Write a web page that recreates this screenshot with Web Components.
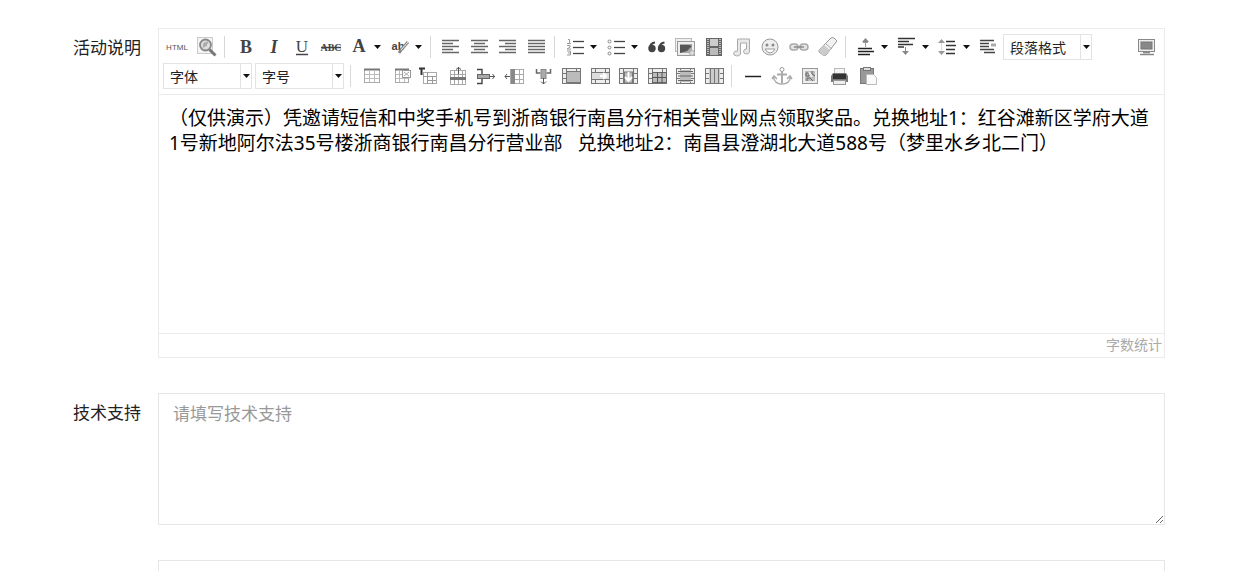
<!DOCTYPE html>
<html lang="zh-CN">
<head>
<meta charset="utf-8">
<meta name="viewport" content="width=device-width, initial-scale=1">
<title>活动设置</title>
<style>
html { scrollbar-width: none; }
body { margin: 0; background: #fff; color: #222; font-family: "Noto Sans", "Noto Sans CJK SC", sans-serif; font-size: 17px; }
</style>
</head>
<body>
<activity-form></activity-form>
<script>
const P = (d, c = '#666', w = 1) => `<path d="${d}" fill="none" stroke="${c}" stroke-width="${w}"/>`;
const R = (x, y, w, h, f, s) => `<rect x="${x}" y="${y}" width="${w}" height="${h}" fill="${f}"${s ? ` stroke="${s}"` : ''}/>`;
const T = (x, y, size, txt, extra = '') => `<text x="${x}" y="${y}" font-size="${size}" text-anchor="middle" fill="#444" ${extra}>${txt}</text>`;
const serif = 'font-family="Liberation Serif, serif" font-weight="bold"';
const lines = (list, c = '#666', w = 1.5) => list.map(([x, y, len]) => P(`M${x} ${y}h${len}`, c, w)).join('');
const miniGrid = (extra = '') => R(1.5, 2.5, 18, 15, '#eee', '#777') + P('M1.5 7.5h18M1.5 12.5h18M5.5 2.5v15M15.5 2.5v15', '#777') + extra;

const ICONS = {
  html: T(9, 13, 8, 'HTML', 'font-family="Liberation Sans, sans-serif" style="fill:#555"'),
  preview: R(.5, .5, 15, 16, '#f4f4f4', '#ccc') + '<circle cx="8.500" cy="8" r="5.500" fill="#ddd" stroke="#888" stroke-width="1.800"/><path d="M5.500 11l1-5 5-2-2 5z" fill="#aaa"/>' + P('M12.500 12.500l6 6', '#777', 3),
  bold: T(11, 16, 18, 'B', serif),
  italic: T(10, 16, 18, 'I', serif + ' font-style="italic"'),
  underline: T(10, 15, 17, 'U', serif + ' style="font-weight:normal"') + P('M4 17.5h12', '#444', 1.5),
  strike: T(10, 14, 10, 'ABC', serif) + P('M0 10.5h20', '#444', 1.5),
  color: T(10, 15, 18, 'A', serif),
  mark: T(8, 13, 11, 'ab', 'font-family="Liberation Sans, sans-serif" font-weight="bold"') + P('M18 5l-7 8-2 3', '#888', 3) + P('M18 5l-7 8', '#eee', 1),
  left: lines([[1,3.5,17],[1,6.5,11],[1,9.5,17],[1,12.5,11],[1,15.5,17]]),
  center: lines([[1,3.5,17],[4,6.5,11],[1,9.5,17],[4,12.5,11],[1,15.5,17]]),
  right: lines([[1,3.5,17],[7,6.5,11],[1,9.5,17],[7,12.5,11],[1,15.5,17]]),
  justify: lines([[1,3.5,17],[1,6.5,17],[1,9.5,17],[1,12.5,17],[1,15.5,17]]),
  ol: lines([[8,4.5,11],[8,10.5,11],[8,16.5,11]], '#444', 1.3) + P('M3 2.5h1.5v4M2 6.5h4M2 8.5h3v1.5l-3 2h4M2 14h3.500v4H2M3 16h2', '#999'),
  ul: lines([[8,4.5,11],[8,10.5,11],[8,16.5,11]], '#444', 1.3) + '<g fill="#fff" stroke="#888"><circle cx="3.500" cy="4.5" r="1.5"/><circle cx="3.500" cy="10.5" r="1.5"/><circle cx="3.500" cy="16.5" r="1.5"/></g>',
  quote: '<g fill="#444"><circle cx="5" cy="11.500" r="3.700"/><circle cx="14.500" cy="11.500" r="3.700"/></g><path d="M8 5.500Q3.500 6 2.500 11M17.500 5.500q-4.500 .5-5.500 5.500" fill="none" stroke="#444" stroke-width="2"/>',
  image: R(-.5, 1.5, 16, 13, '#eee', '#bbb') + R(1.5, 4.5, 17, 14, '#eee', '#999') + R(4, 7, 12, 9, '#aaa') + '<path d="M4 8h9l3 1-5 5-7 2z" fill="#555"/><circle cx="16" cy="16" r="2.5" fill="#ddd" stroke="#aaa"/>',
  video: R(2, 1, 16, 18, '#666') + R(6, 2, 8, 7, '#ccc') + R(6, 11, 8, 7, '#bbb') + '<path d="M4 2v16M16 2v16" stroke="#ddd" stroke-width="1.500" stroke-dasharray="1 1"/>',
  music: '<path d="M5.500 2h12v13a3 2.500 0 1 1-3-3V6h-6v11a3.500 2.500 0 1 1-3-3z" fill="#e8e8e8" stroke="#aaa"/>',
  face: '<circle cx="9" cy="10" r="8" fill="#eee" stroke="#999"/><circle cx="6" cy="8" r="1.500" fill="#888"/><circle cx="12" cy="8" r="1.500" fill="#888"/><path d="M4 12h10q-2 4-5 4t-5-4z" fill="#fff" stroke="#999"/>',
  link: '<g fill="#e4e4e4" stroke="#aaa" stroke-width="1.500"><rect x="1" y="7" width="8" height="6" rx="3"/><rect x="11" y="7" width="8" height="6" rx="3"/></g>' + P('M5 10h10', '#888', 1.5),
  eraser: '<path d="M1 13L13 1q1-1 3 0l3 3L8 18q-2 1-3 0l-4-3z" fill="#f2f2f2" stroke="#999"/><path d="M1 13l5-5 6 5-5 5q-2 1-3 0z" fill="#ccc"/>' + P('M8 7l6 5', '#aaa'),
  before: lines([[2,11.500,14],[2,14.500,16],[2,17.500,12]], '#222') + P('M9.5 10V3M7 5.500h5', '#999') + '<path d="M6 5l3.500-4 3.500 4z" fill="#888"/>',
  after: lines([[1,1.500,17],[1,4.500,11],[1,7.500,15],[1,10,6]], '#333') + P('M8.500 10v6', '#888') + '<path d="M5 14h7l-3.500 4z" fill="#888"/>',
  lineheight: lines([[8,4.500,9],[8,8.500,10],[8,12.500,9],[8,16.500,9]], '#333') + P('M3.500 5v10', '#ddd') + '<path d="M0 6l3.500-4L7 6zM0 14l3.500 4L7 14z" fill="#999"/>',
  indent: lines([[1,3.500,14],[1,6.500,9],[1,9.500,9],[1,12.500,14],[5,15.500,11]], '#444') + P('M12 8h5', '#aaa', 3),
  full: R(2.5, 2.5, 16, 12, '#eee', '#888') + R(5, 5, 11, 7, '#888', '#777') + P('M7 15.500h7M4 17.500h14', '#888', 1.500),
  table: R(3.5, 3.5, 15, 13, '#fff', '#aaa') + P('M3 3.5h16', '#777', 2) + P('M4 8.500h14M4 12.500h14M8.500 5v11M13.500 5v11', '#bbb'),
  deltable: R(5.5, 3.5, 13, 13, '#fff', '#aaa') + P('M5 3.5h14', '#777', 2) + P('M6 8.500h12M6 12.500h12M9.500 5v11M14.500 5v11', '#bbb') + R(12.500, 4.500, 8, 7, '#fff', '#999') + P('M14 6l5 4M19 6l-5 4', '#aaa'),
  title: P('M1 2.500h6M3.500 2v7', '#333', 2) + R(5.5, 6.5, 13, 11, '#fff', '#aaa') + P('M5 10.500h13M9.500 6v12M10 14.500h8M14.500 10v8', '#999'),
  rowins: R(3.5, 4.5, 15, 14, '#fff', '#aaa') + P('M7.500 4v14M11.500 4v14M15.500 4v14M3 8.500h16', '#aaa') + R(3, 11, 16, 3, '#777') + P('M11.500 1v7M9 3.500l2.500-2 2.500 2', '#555'),
  rowdel: P('M2 3.5h5v5M2 17.500h5v-5', '#444', 1.4) + R(2.500, 8.500, 12, 4, '#aaa', '#666') + P('M15 10.500h5M17.500 8l2 2.500-2 2.500', '#555'),
  colins: R(6.500, 3.500, 13, 14, '#fff', '#aaa') + P('M10 3v15M15.500 3v15M6 8.500h13M6 13.500h13', '#aaa') + R(7, 3, 4, 15, '#888') + P('M6 10.500H1M3 8l-2 2.500 2 2.500', '#555'),
  coldel: P('M4.500 3v4h4M18.500 3v4h-4', '#666', 1.500) + R(9, 3.500, 5, 9, '#aaa', '#888') + P('M11.500 12v6M9 15.500l2.500 2.500 2.500-2.500', '#555'),
  merge: miniGrid(R(5.5, 5.5, 14, 11, '#bbb', '#777')),
  mergeright: miniGrid(R(1.5, 6.5, 18, 7, '#ddd', '#777') + P('M10 10h6M13 7l3 3-3 3', '#fff', 2)),
  mergedown: miniGrid(R(6.500, 6, 8, 11, '#bbb', '#777') + P('M10.500 6v9M7 11l3.500 4 3.500-4', '#fff', 2)),
  splitcells: miniGrid(R(5.500, 6.500, 14, 10, '#bbb', '#666') + P('M10.500 6v11M15 6v11M5 11.500h14', '#555')),
  splitrows: miniGrid(R(5, 4, 11, 12, '#bbb') + P('M3 5.500h15M3 10h15M3 14.500h15', '#666')),
  splitcols: miniGrid(R(5, 3, 11, 14, '#ccc') + P('M6.500 3v14M10.500 3v14M14.500 3v14', '#777')),
  hr: P('M3 10.500h16', '#222', 1.5),
  anchor: '<circle cx="11" cy="3.500" r="2" fill="#fff" stroke="#999"/>' + P('M11 6v11M6 8.500h10', '#aaa', 2) + P('M2.500 11q1 7 8.500 7t8.500-7M1 13l2-3 3 3M16 13l3-3 2 3', '#aaa', 1.5),
  map: R(3.5, 2.5, 15, 15, '#eee', '#999') + R(6, 5, 10, 10, '#bbb') + P('M7 7h3v3H7zM13 5v3l3 2M8 15v-3h3l3 3', '#666') + P('M10 6l3 5', '#eee', 2),
  print: R(6.5, 2.5, 10, 6, '#f4f4f4', '#bbb') + '<path d="M5 7h13l2 3v6H3v-6z" fill="#777"/>' + R(5, 8, 13, 5, '#333') + R(5.500, 14.500, 12, 4, '#eee', '#999'),
  paste: R(3.5, 2.5, 13, 15, '#999', '#777') + R(6.5, 1.5, 7, 3, '#ddd', '#777') + '<path d="M9.500 8.500h7l3 3v7h-10z" fill="#fafafa" stroke="#bbb"/>'
};
const NAMES = { html:'源代码', preview:'预览', bold:'加粗', italic:'斜体', underline:'下划线', strike:'删除线', color:'字体颜色', mark:'背景色', left:'居左对齐', center:'居中对齐', right:'居右对齐', justify:'两端对齐', ol:'有序列表', ul:'无序列表', quote:'引用', image:'图片', video:'视频', music:'音乐', face:'表情', link:'超链接', eraser:'清除格式', before:'段前距', after:'段后距', lineheight:'行间距', indent:'首行缩进', full:'全屏', table:'插入表格', deltable:'删除表格', title:'插入标题', rowins:'前插入行', rowdel:'删除行', colins:'前插入列', coldel:'删除列', merge:'合并单元格', mergeright:'右合并', mergedown:'下合并', splitcells:'拆分单元格', splitrows:'拆分行', splitcols:'拆分列', hr:'分隔线', anchor:'锚点', map:'地图', print:'打印', paste:'粘贴' };

function shadow(el, html) {
  const t = document.createElement('template');
  t.innerHTML = html;
  el.attachShadow({ mode: 'open' }).append(t.content.cloneNode(true));
}

/* One toolbar button; the "menu" attribute adds a drop-down arrow. */
class ToolButton extends HTMLElement {
  connectedCallback() {
    const n = this.getAttribute('icon');
    shadow(this, `<style>
      :host { display: block; flex: 1 1 28px; }
      :host([menu]) { flex: 0 0 41px; }
      button { display: flex; align-items: center; justify-content: center; width: 100%; height: 28px; padding: 0; border: 0; background: none; cursor: pointer; }
      :host([menu]) button { justify-content: flex-start; padding-left: 4px; gap: 5px; }
      svg { display: block; flex: none; overflow: visible; }
    </style><button type="button" aria-label="${NAMES[n]}"><svg width="20" height="20" viewBox="0 0 20 20">${ICONS[n]}</svg>${this.hasAttribute('menu') ? '<svg width="7" height="4" viewBox="0 0 7 4"><path d="M0 0h7L3.500 4z" fill="#111"/></svg>' : ''}</button>`);
  }
}
customElements.define('tool-button', ToolButton);

class ToolSelect extends HTMLElement {
  connectedCallback() {
    const l = this.getAttribute('label');
    shadow(this, `<style>
      :host { display: flex; box-sizing: border-box; width: 89px; height: 26px; margin-right: 3px; border: 1px solid #e3e3e3; background: #fff; }
      select { appearance: none; flex: 1; min-width: 0; padding: 0 0 0 6px; border: 0; background: none; color: #222; font: inherit; font-size: 14px; }
      span { display: flex; align-items: center; justify-content: center; width: 10px; border-left: 1px solid #e3e3e3; }
    </style><select aria-label="${l}"><option>${l}</option></select><span><svg width="7" height="4" viewBox="0 0 7 4"><path d="M0 0h7L3.500 4z" fill="#111"/></svg></span>`);
  }
}
customElements.define('tool-select', ToolSelect);

class ToolSeparator extends HTMLElement {
  connectedCallback() {
    shadow(this, `<style>:host { display: block; width: 1px; height: 22px; margin: 0 6px 0 3px; background: #d8d8d8; }</style>`);
  }
}
customElements.define('tool-separator', ToolSeparator);

const btns = (s) => s.split(' ').map(n => `<tool-button icon="${n}"></tool-button>`).join('');
const menus = (s) => s.split(' ').map(n => `<tool-button icon="${n}" menu></tool-button>`).join('');
const group = (w, s) => `<div class="group" style="width:${w}px">${btns(s)}</div>`;
const SEP = '<tool-separator></tool-separator>';

class EditorToolbar extends HTMLElement {
  connectedCallback() {
    shadow(this, `<style>
      :host { display: flex; flex-direction: column; gap: 1px; padding: 4px; border-bottom: 1px solid #ebebeb; }
      .row { display: flex; align-items: center; min-height: 28px; }
      .group { display: flex; flex: none; }
      .end { margin-left: auto; }
    </style>
    <div class="row">${group(58, 'html preview')}${SEP}${group(114, 'bold italic underline strike')}${menus('color mark')}${SEP}${group(114, 'left center right justify')}${SEP}${menus('ol ul')}${group(199, 'quote image video music face link eraser')}${SEP}${menus('before after lineheight')}${group(28, 'indent')}<tool-select label="段落格式"></tool-select><div class="group end" style="width:28px">${btns('full')}</div></div>
    <div class="row"><tool-select label="字体"></tool-select><tool-select label="字号"></tool-select>${SEP}${group(371, 'table deltable title rowins rowdel colins coldel merge mergeright mergedown splitcells splitrows splitcols')}${SEP}${group(143, 'hr anchor map print paste')}</div>`);
  }
}
customElements.define('editor-toolbar', EditorToolbar);

class RichEditor extends HTMLElement {
  connectedCallback() {
    shadow(this, `<style>
      :host { display: block; border: 1px solid #ebebeb; background: #fff; }
      .content { box-sizing: border-box; min-height: 238px; padding: 11px 10px; color: #000; font-size: 19px; line-height: 25px; outline: 0; }
      footer { height: 23px; padding-right: 2px; border-top: 1px solid #ebebeb; color: #aaa; font-size: 14px; line-height: 22px; text-align: right; }
    </style>
    <editor-toolbar></editor-toolbar>
    <div class="content" contenteditable="true" role="textbox" aria-multiline="true" aria-label="活动说明" spellcheck="false"><slot></slot></div>
    <footer>字数统计</footer>`);
  }
}
customElements.define('rich-editor', RichEditor);

/* A labelled row: the label column on the left, the field fills the rest. */
class FormRow extends HTMLElement {
  connectedCallback() {
    shadow(this, `<style>
      :host { display: grid; grid-template-columns: 141px minmax(0, 1fr); column-gap: 17px; }
      .label { padding-top: 8px; line-height: 24px; text-align: right; }
      .field { grid-column: 2; }
    </style><div class="label"><slot name="label"></slot></div><div class="field"><slot></slot></div>`);
  }
}
customElements.define('form-row', FormRow);

class ActivityForm extends HTMLElement {
  connectedCallback() {
    shadow(this, `<style>
      :host { display: flex; flex-direction: column; gap: 35px; padding: 28px 91px 35px 0; }
      textarea { display: block; box-sizing: border-box; width: 100%; height: 132px; margin: 0; padding: 8px 14px; border: 1px solid #e6e6e6; border-radius: 0; background: #fff; color: #222; font: inherit; line-height: 24px; resize: vertical; }
      textarea::placeholder { color: #999; opacity: 1; }
      p { margin: 0; }
    </style>
    <form-row><span slot="label">活动说明</span><rich-editor><p>（仅供演示）凭邀请短信和中奖手机号到浙商银行南昌分行相关营业网点领取奖品。兑换地址1：红谷滩新区学府大道1号新地阿尔法35号楼浙商银行南昌分行营业部&nbsp;&nbsp; 兑换地址2：南昌县澄湖北大道588号（梦里水乡北二门）</p></rich-editor></form-row>
    <form-row><label slot="label" for="support">技术支持</label><textarea id="support" placeholder="请填写技术支持"></textarea></form-row>
    <form-row><textarea aria-label="备注"></textarea></form-row>`);
  }
}
customElements.define('activity-form', ActivityForm);
</script>
</body>
</html>
